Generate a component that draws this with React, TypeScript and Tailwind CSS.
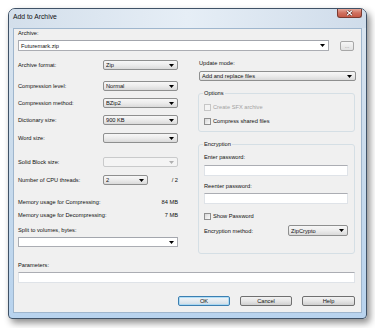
import type { ReactNode } from 'react'

const Arrow = ({ disabled = false }: { disabled?: boolean }) => (
  <svg width="5" height="3" viewBox="0 0 5 3" className="shrink-0">
    <polygon points="0,0 5,0 2.5,3" fill={disabled ? '#b0b0b0' : '#000'} />
  </svg>
)

// Vista style drop-down list (button look)
const Combo = ({
  value = '',
  className,
  disabled = false,
}: {
  value?: string
  className: string
  disabled?: boolean
}) => (
  <div
    className={`flex items-center rounded-[2px] border pl-[2px] pr-[3px] ${
      disabled
        ? 'border-[#c9cacb] bg-[#f4f4f4]'
        : 'border-[#8e8f8f] bg-linear-to-b from-[#f7f7f7] via-[#ececec] to-[#dadada]'
    } ${className}`}
  >
    <span className="flex-1 leading-[8px] truncate">{value}</span>
    <Arrow disabled={disabled} />
  </div>
)

// editable combo (white field)
const EditCombo = ({ value = '', className }: { value?: string; className: string }) => (
  <div
    className={`flex items-center border border-[#abadb3] border-t-[#a3a6ad] bg-white pl-[2px] pr-[3px] ${className}`}
  >
    <span className="flex-1 leading-[8px]">{value}</span>
    <Arrow />
  </div>
)

const Input = ({ className }: { className: string }) => (
  <div className={`border border-[#dfe3e8] border-t-[#abadb3] bg-white ${className}`} />
)

const Check = ({ label, disabled = false, className }: { label: string; disabled?: boolean; className: string }) => (
  <div className={`flex items-center h-[8px] ${className}`}>
    <span
      className={`w-[7px] h-[7px] border ${
        disabled
          ? 'border-[#c6c6c6] bg-[#f4f4f4]'
          : 'border-[#8f8f8f] bg-linear-to-br from-[#d8d8d8] to-[#fbfbfb]'
      }`}
    />
    <span className={`ml-[2px] leading-[8px] ${disabled ? 'text-[#a3a3a3]' : ''}`}>{label}</span>
  </div>
)

const Row = ({ label, children, className }: { label: string; children: ReactNode; className: string }) => (
  <div className={`flex items-center justify-between ${className}`}>
    <span className="leading-[8px]">{label}</span>
    {children}
  </div>
)

const Group = ({ title, children, className }: { title: string; children: ReactNode; className: string }) => (
  <div className={`rounded-[3px] border border-[#d5dfe5] pl-[5px] pr-[6px] ${className}`}>
    <div className="-mt-[5px] -ml-[1px] w-fit bg-[#f0f0f0] px-[1px] leading-[8px]">{title}</div>
    {children}
  </div>
)

const Button = ({ label, def = false, className }: { label: string; def?: boolean; className: string }) => (
  <div
    className={`flex h-[10px] items-center justify-center rounded-[2px] border leading-[8px] ${
      def
        ? 'border-[#3c7fb1] bg-linear-to-b from-[#f1f5f8] via-[#e3eaf0] to-[#cfdbe4] shadow-[inset_0_0_0_1px_rgba(160,215,245,0.8)]'
        : 'border-[#707070] bg-linear-to-b from-[#f2f2f2] via-[#e6e6e6] to-[#d0d0d0]'
    } ${className}`}
  >
    {label}
  </div>
)

export default function App() {
  return (
    <div className="h-[328px] w-[375px] bg-white pl-[8px] pt-[8px] font-['Liberation_Sans',Arial,sans-serif] text-[5.7px] text-[#111]">
      <div className="flex h-[311px] w-[359px] flex-col rounded-t-[7px] rounded-b-[4px] border border-[#3f5267] bg-linear-to-b from-[#dbe5ef] via-[#c9dbec] to-[#b8d3ee] px-[4px] pb-[5px] shadow-[3px_4px_7px_rgba(0,0,0,0.45)]">
        {/* title bar */}
        <div className="flex h-[19px] items-start justify-between bg-linear-to-r from-[#d3dfeb] via-[#e6eef6] to-[#cfdcea] -mx-[4px] pl-[4px] pr-[4px] rounded-t-[6px]">
          <span className="pt-[3px] text-[6.8px] leading-[9px] text-[#111]">Add to Archive</span>
          <div className="flex h-[9px] w-[25px] items-center justify-center rounded-b-[3px] border border-t-0 border-[#7a3a30] bg-linear-to-b from-[#e4a89b] via-[#d0705f] to-[#c55a47]">
            <svg width="7" height="6" viewBox="0 0 7 6">
              <path d="M1 0.8 L6 5.2 M6 0.8 L1 5.2" stroke="#4a1d17" strokeWidth="2.2" />
              <path d="M1 0.8 L6 5.2 M6 0.8 L1 5.2" stroke="#fff" strokeWidth="1.2" />
            </svg>
          </div>
        </div>

        {/* client area */}
        <div className="flex h-[285px] flex-col border border-[#9fb6cd] bg-[#f0f0f0] pl-[4px] pr-[6px]">
          <div className="leading-[8px]">Archive:</div>
          <div className="mt-[3px] flex h-[11px] items-center justify-between">
            <EditCombo value="Futuremark.zip" className="h-[11px] w-[311px]" />
            <div className="mr-[1px] flex h-[10px] w-[14px] items-center justify-center rounded-[2px] border border-[#a7a7a7] bg-linear-to-b from-[#f6f6f6] to-[#e2e2e2] text-[#8a8a8a] leading-[6px]">
              ...
            </div>
          </div>

          <div className="flex gap-[20px]">
            {/* left column */}
            <div className="flex w-[160px] flex-col">
              <Row label="Archive format:" className="mt-[9px] h-[10px]">
                <Combo value="Zip" className="h-[10px] w-[75px]" />
              </Row>
              <Row label="Compression level:" className="mt-[11px] h-[10px]">
                <Combo value="Normal" className="h-[10px] w-[75px]" />
              </Row>
              <Row label="Compression method:" className="mt-[7px] h-[10px]">
                <Combo value="BZip2" className="h-[10px] w-[75px]" />
              </Row>
              <Row label="Dictionary size:" className="mt-[7px] h-[10px]">
                <Combo value="900 KB" className="h-[10px] w-[75px]" />
              </Row>
              <Row label="Word size:" className="mt-[8px] h-[10px]">
                <Combo className="h-[10px] w-[75px]" />
              </Row>
              <Row label="Solid Block size:" className="mt-[14px] h-[10px]">
                <Combo disabled className="h-[10px] w-[75px]" />
              </Row>
              <Row label="Number of CPU threads:" className="mt-[8px] h-[10px]">
                <div className="flex w-[75px] items-center justify-between">
                  <Combo value="2" className="h-[10px] w-[45px]" />
                  <span className="leading-[8px]">/ 2</span>
                </div>
              </Row>
              <div className="mt-[13px] flex justify-between leading-[8px]">
                <span>Memory usage for Compressing:</span>
                <span>84 MB</span>
              </div>
              <div className="mt-[5px] flex justify-between leading-[8px]">
                <span>Memory usage for Decompressing:</span>
                <span>7 MB</span>
              </div>
              <div className="mt-[7px] leading-[8px]">Split to volumes, bytes:</div>
              <EditCombo className="mt-[3px] h-[10px] w-[160px]" />
            </div>

            {/* right column */}
            <div className="flex w-[157px] flex-col">
              <div className="ml-[1px] mt-[8px] leading-[8px]">Update mode:</div>
              <Combo value="Add and replace files" className="ml-[1px] mt-[4px] h-[10px] w-[157px]" />

              <Group title="Options" className="mt-[12px] pb-[6px]">
                <Check label="Create SFX archive" disabled className="mt-[6px]" />
                <Check label="Compress shared files" className="mt-[6px]" />
              </Group>

              <Group title="Encryption" className="mt-[12px] pb-[17px]">
                <div className="mt-[5px] leading-[8px]">Enter password:</div>
                <Input className="mt-[4px] h-[11px] w-[144px]" />
                <div className="mt-[6px] leading-[8px]">Reenter password:</div>
                <Input className="mt-[3px] h-[11px] w-[144px]" />
                <Check label="Show Password" className="mt-[8px]" />
                <Row label="Encryption method:" className="mt-[5px] h-[11px] w-[144px]">
                  <Combo value="ZipCrypto" className="h-[11px] w-[60px]" />
                </Row>
              </Group>
            </div>
          </div>

          <div className="mt-[7px] leading-[8px]">Parameters:</div>
          <Input className="mt-[3px] h-[11px] w-[337px]" />

          <div className="mt-[13px] flex justify-end gap-[10px]">
            <Button label="OK" def className="w-[52px]" />
            <Button label="Cancel" className="w-[52px]" />
            <Button label="Help" className="w-[53px]" />
          </div>
        </div>
      </div>
    </div>
  )
}
